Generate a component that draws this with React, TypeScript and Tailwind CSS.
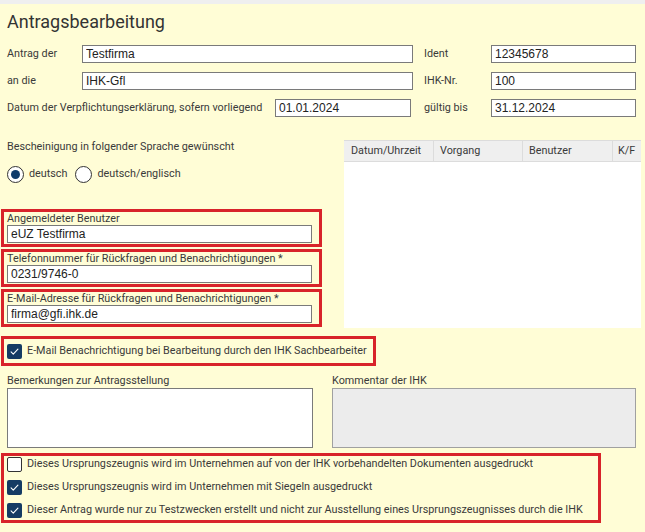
import React from 'react';

const labelCls = "text-[10.8px] leading-[14px] text-[#3a3a3a]";
const inputCls = "block h-[18px] border border-[#7a7a7a] bg-white px-[3px] text-[12px] leading-[16px] text-[#222] font-['Liberation_Sans',Arial,sans-serif] outline-none";

const TextField: React.FC<{ value: string; className?: string }> = ({ value, className }) => (
    <input readOnly value={value} className={`${inputCls} ${className ?? ''}`} />
);

const Radio: React.FC<{ checked?: boolean; label: string }> = ({ checked, label }) => (
    <label className="flex items-center gap-[5px]">
        <span className="w-[17px] h-[17px] rounded-full border-[1.5px] border-[#333] bg-white flex items-center justify-center">
            {checked && <span className="w-[9px] h-[9px] rounded-full bg-[#0e3b6b]" />}
        </span>
        <span className="text-[10.8px] text-[#3a3a3a]">{label}</span>
    </label>
);

const Check: React.FC<{ checked?: boolean; label: string }> = ({ checked, label }) => (
    <label className="flex items-center gap-[5px] h-[16px]">
        {checked ? (
            <span className="w-[15px] h-[15px] rounded-[2px] bg-[#153b64] flex items-center justify-center">
                <svg viewBox="0 0 16 16" className="w-[11px] h-[11px]" fill="none" stroke="white" strokeWidth="1.6" strokeLinecap="round" strokeLinejoin="round">
                    <path d="M3 8.5l3.2 3.2L13 4.5" />
                </svg>
            </span>
        ) : (
            <span className="w-[15px] h-[15px] rounded-[2px] border border-[#333] bg-white" />
        )}
        <span className="text-[10.8px] text-[#3a3a3a]">{label}</span>
    </label>
);

const RedBox: React.FC<{ className?: string; children: React.ReactNode }> = ({ className, children }) => (
    <div className={`border-[3px] border-[#d8232a] ${className ?? ''}`}>{children}</div>
);

export default function App() {
    return (
        <div className="w-[645px] h-[532px] overflow-hidden bg-[#fffdd6] font-['Roboto',sans-serif] flex flex-col">
            <div className="h-[4px] bg-[#efefef]" />
            <h1 className="mt-[6px] ml-[7px] text-[18px] leading-[24px] text-[#333]">Antragsbearbeitung</h1>

            {/* Kopfdaten */}
            <div className="mt-[11px] flex flex-col gap-[9px]">
                <div className="flex items-center">
                    <span className={`${labelCls} pl-[7px] w-[82px]`}>Antrag der</span>
                    <TextField value="Testfirma" className="w-[331px]" />
                    <span className={`${labelCls} ml-[11px] w-[67px]`}>Ident</span>
                    <TextField value="12345678" className="w-[145px]" />
                </div>
                <div className="flex items-center">
                    <span className={`${labelCls} pl-[7px] w-[82px]`}>an die</span>
                    <TextField value="IHK-Gfl" className="w-[331px]" />
                    <span className={`${labelCls} ml-[11px] w-[67px]`}>IHK-Nr.</span>
                    <TextField value="100" className="w-[145px]" />
                </div>
                <div className="flex items-center">
                    <span className={`${labelCls} pl-[7px] w-[275px]`}>Datum der Verpflichtungserklärung, sofern vorliegend</span>
                    <TextField value="01.01.2024" className="w-[136px]" />
                    <span className={`${labelCls} ml-[13px] w-[67px]`}>gültig bis</span>
                    <TextField value="31.12.2024" className="w-[145px]" />
                </div>
            </div>

            {/* Sprache, Benutzer & Verlauf */}
            <div className="mt-[23px] flex">
                <div className="w-[322px] flex flex-col">
                    <span className={`${labelCls} pl-[7px]`}>Bescheinigung in folgender Sprache gewünscht</span>
                    <div className="mt-[12px] ml-[7px] flex items-center gap-[8px]">
                        <Radio checked label="deutsch" />
                        <Radio label="deutsch/englisch" />
                    </div>
                    <div className="mt-[26px] ml-[1px] flex flex-col gap-[2px]">
                        <RedBox className="h-[38px] pl-[3px] pt-[1px]">
                            <div className="text-[10.8px] leading-[12px] text-[#3a3a3a]">Angemeldeter Benutzer</div>
                            <TextField value="eUZ Testfirma" className="w-[305px]" />
                        </RedBox>
                        <RedBox className="h-[38px] pl-[3px] pt-[1px]">
                            <div className="text-[10.8px] leading-[12px] text-[#3a3a3a]">Telefonnummer für Rückfragen und Benachrichtigungen *</div>
                            <TextField value="0231/9746-0" className="w-[305px]" />
                        </RedBox>
                        <RedBox className="h-[38px] pl-[3px] pt-[1px]">
                            <div className="text-[10.8px] leading-[12px] text-[#3a3a3a]">E-Mail-Adresse für Rückfragen und Benachrichtigungen *</div>
                            <TextField value="firma@gfi.ihk.de" className="w-[305px]" />
                        </RedBox>
                    </div>
                </div>
                <div className="ml-[22px] w-[297px] h-[188px] bg-white flex flex-col">
                    <div className="h-[22px] flex bg-[#efefef] border-y border-[#dcdcdc] text-[10.8px] text-[#3a3a3a]">
                        <div className="w-[90px] pl-[7px] flex items-center border-r border-[#dcdcdc]">Datum/Uhrzeit</div>
                        <div className="w-[89px] pl-[6px] flex items-center border-r border-[#dcdcdc]">Vorgang</div>
                        <div className="w-[90px] pl-[6px] flex items-center border-r border-[#dcdcdc]">Benutzer</div>
                        <div className="flex-1 pl-[5px] flex items-center">K/F</div>
                    </div>
                </div>
            </div>

            {/* Benachrichtigung */}
            <RedBox className="mt-[8px] ml-[1px] w-[375px] h-[30px] pl-[3px] flex items-center">
                <Check checked label="E-Mail Benachrichtigung bei Bearbeitung durch den IHK Sachbearbeiter" />
            </RedBox>

            {/* Bemerkungen */}
            <div className="mt-[8px] flex">
                <div className="ml-[7px] w-[306px] flex flex-col">
                    <span className={labelCls}>Bemerkungen zur Antragsstellung</span>
                    <textarea readOnly className="h-[60px] border border-[#7a7a7a] bg-white resize-none outline-none" />
                </div>
                <div className="ml-[19px] w-[304px] flex flex-col">
                    <span className={labelCls}>Kommentar der IHK</span>
                    <textarea readOnly className="h-[60px] border border-[#a0a0a0] bg-[#ececec] resize-none outline-none" />
                </div>
            </div>

            {/* Erklärungen */}
            <RedBox className="mt-[5px] ml-[1px] w-[600px] h-[70px] pl-[3px] flex flex-col gap-[7px]">
                <Check label="Dieses Ursprungszeugnis wird im Unternehmen auf von der IHK vorbehandelten Dokumenten ausgedruckt" />
                <Check checked label="Dieses Ursprungszeugnis wird im Unternehmen mit Siegeln ausgedruckt" />
                <Check checked label="Dieser Antrag wurde nur zu Testzwecken erstellt und nicht zur Ausstellung eines Ursprungszeugnisses durch die IHK" />
            </RedBox>
        </div>
    );
}
